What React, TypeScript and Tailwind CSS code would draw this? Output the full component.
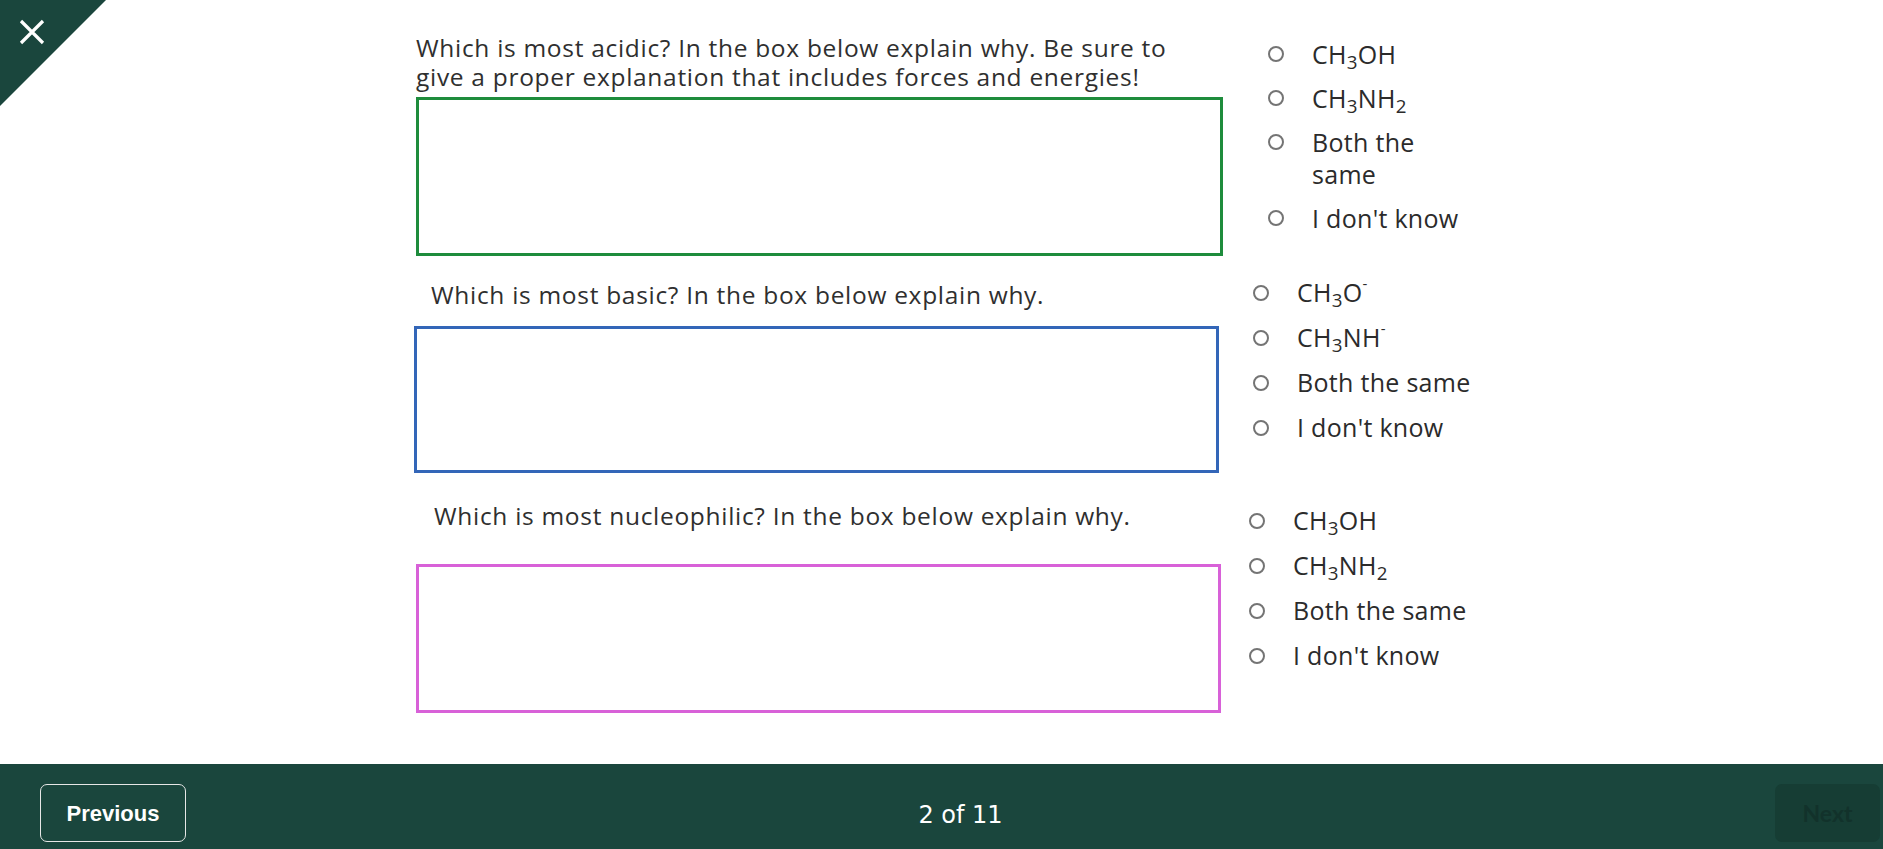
import type { ReactNode } from 'react';

type Option = { label: ReactNode };

const questions: {
  text: string;
  textWidth: string;
  textPad: string;
  boxGap: string;
  boxClass: string;
  rowClass: string;
  colGap: string;
  optWidth: string;
  optPad: string;
  options: Option[];
}[] = [
  {
    text: 'Which is most acidic? In the box below explain why. Be sure to give a proper explanation that includes forces and energies!',
    textWidth: 'w-[790px]',
    textPad: 'pt-[1px]',
    boxGap: 'mt-[6px]',
    boxClass: 'w-[807px] h-[159px] border-[#1e8c3c]',
    rowClass: 'ml-[2px] pt-[32px]',
    colGap: 'gap-[45px]',
    optWidth: 'w-[155px] leading-[32px]',
    optPad: 'py-[6px]',
    options: [
      { label: <>CH<sub>3</sub>OH</> },
      { label: <>CH<sub>3</sub>NH<sub>2</sub></> },
      { label: 'Both the same' },
      { label: "I don't know" },
    ],
  },
  {
    text: 'Which is most basic? In the box below explain why.',
    textWidth: 'w-[780px]',
    textPad: 'pt-[10px] pl-[17px]',
    boxGap: 'mt-[17px]',
    boxClass: 'w-[805px] h-[147px] border-[#3366b8]',
    rowClass: 'pt-[14px]',
    colGap: 'gap-[34px]',
    optWidth: 'w-[210px] leading-[31px]',
    optPad: 'py-[7px]',
    options: [
      { label: <>CH<sub>3</sub>O<sup className="text-[15px] top-[-0.85em]">-</sup></> },
      { label: <>CH<sub>3</sub>NH<sup className="text-[15px] top-[-0.85em]">-</sup></> },
      { label: 'Both the same' },
      { label: "I don't know" },
    ],
  },
  {
    text: 'Which is most nucleophilic? In the box below explain why.',
    textWidth: 'w-[780px]',
    textPad: 'pt-[3px] pl-[18px]',
    boxGap: 'mt-[34px]',
    boxClass: 'w-[805px] h-[149px] border-[#d861d8]',
    rowClass: 'ml-[2px] pt-[25px]',
    colGap: 'gap-[28px]',
    optWidth: 'w-[210px] leading-[31px]',
    optPad: 'py-[7px]',
    options: [
      { label: <>CH<sub>3</sub>OH</> },
      { label: <>CH<sub>3</sub>NH<sub>2</sub></> },
      { label: 'Both the same' },
      { label: "I don't know" },
    ],
  },
];

function Radio() {
  return <span className="mt-[7.5px] block w-[16px] h-[16px] shrink-0 rounded-full border-2 border-[#747474] bg-white" />;
}

export default function App() {
  return (
    <div className="min-h-screen flex flex-col bg-white font-['Open_Sans',sans-serif] text-[#2f2f2f]">
      {/* close corner */}
      <button className="absolute top-0 left-0 w-[106px] h-[106px] bg-[#1a463d] [clip-path:polygon(0_0,100%_0,0_100%)]">
        <svg width="106" height="106" viewBox="0 0 106 106" className="absolute top-0 left-0">
          <path d="M21 21 L43 43 M43 21 L21 43" stroke="#ffffff" strokeWidth="3.2" />
        </svg>
      </button>

      <main className="flex-1">
        <div className="w-[1055px] mx-auto">
          {questions.map((q, i) => (
            <section key={i} className={`flex items-start ${q.colGap} ${q.rowClass}`}>
              <div className="flex flex-col">
                <p className={`${q.textWidth} ${q.textPad} text-[24.5px] leading-[29px] tracking-[0.7px]`}>{q.text}</p>
                <div className={`${q.boxGap} ${q.boxClass} border-[3px] bg-white`} />
              </div>
              <ul className="flex flex-col">
                {q.options.map((o, j) => (
                  <li key={j} className={`flex items-start gap-[28px] ${q.optPad}`}>
                    <Radio />
                    <span className={`${q.optWidth} text-[25px] tracking-[0.3px] text-[#2b2b2b]`}>{o.label}</span>
                  </li>
                ))}
              </ul>
            </section>
          ))}
        </div>
      </main>

      <footer className="h-[85px] bg-[#1a463d] flex items-start pt-[20px] pl-[40px] pr-[3px]">
        <button className="w-[146px] h-[58px] rounded-[7px] border border-[#e6e6e6] text-white font-['Liberation_Sans',Arial,sans-serif] font-bold text-[22px]">
          Previous
        </button>
        <div className="flex-1 pr-[40px] h-[58px] pt-[3px] flex items-center justify-center text-white font-['DejaVu_Sans',Verdana,sans-serif] text-[24px]">2 of 11</div>
        <button className="w-[105px] h-[58px] rounded-[7px] bg-[#163d34] text-[#12322b] font-['Lato',sans-serif] font-bold text-[23px]">
          Next
        </button>
      </footer>
    </div>
  );
}
